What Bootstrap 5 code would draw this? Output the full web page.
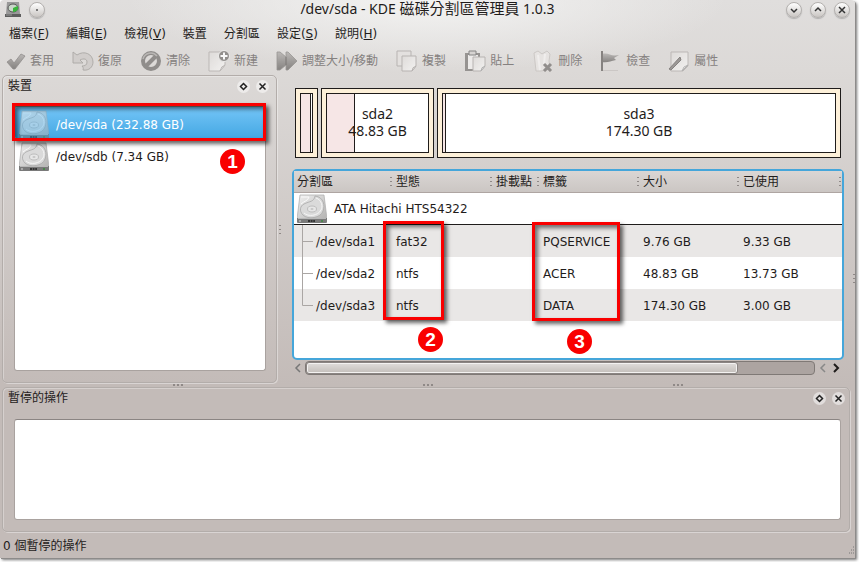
<!DOCTYPE html>
<html lang="zh-Hant">
<head>
<meta charset="utf-8">
<meta name="viewport" content="width=device-width, initial-scale=1">
<title>/dev/sda - KDE 磁碟分割區管理員 1.0.3</title>
<link href="https://cdn.jsdelivr.net/npm/bootstrap@5.3.0/dist/css/bootstrap.min.css" rel="stylesheet">
<style>
  body { background: #fff; color: #1f1c1b; font: 12px/16px "DejaVu Sans", "Noto Sans CJK TC", sans-serif; }
  button { color: inherit; font: inherit; background: none; border: 0; padding: 0; }
  svg { display: block; flex: none; }
  .page { padding: 0 4px 4px 0; }
  .win { min-width: 0; background: radial-gradient(ellipse 300px 72px at 50% 0, #f3f3f2 0, #f3f3f200 100%), linear-gradient(#e0dedd 0, #dcd9d7 70px, #c3bbb8 385px);
    box-shadow: 1px 1px 0 #8d8b8a, 2px 2px 3px #777; border-radius: 4px 4px 0 0; }
  .titlebar { height: 20px; padding: 0 5px; font: 14px/18px "Noto Sans", "Noto Sans CJK TC", sans-serif; }
  .titlebar span { font-size: 15px; line-height: 16px; }
  .caption-text { height: 20px; }
  .side { width: 64px; height: 18px; }
  .round { width: 16px; height: 16px; border-radius: 50%; border: 1px solid #b3b0ae; background: linear-gradient(#fff, #c9c5c2); box-shadow: 0 1px 1px #8888; }
  .menubar { padding: 6px 9px 4px; gap: 17px; height: 27px; }
  .menubar a { color: inherit; text-decoration: none; white-space: nowrap; }
  .toolbar { height: 28px; gap: 18px; padding-left: 4px; color: #858180; }
  .tool { gap: 4px; white-space: nowrap; }
  .tool svg { opacity: .85; }
  .panel { border: 1px solid #b3adaa; border-radius: 5px; box-shadow: inset 1px 1px 0 #ffffff50, 1px 1px 0 #ffffff60; }
  .panel-head { height: 20px; padding: 2px 7px 2px 5px; }
  .mini { width: 13px; height: 13px; border-radius: 50%; background: #ffffff80; margin-left: 6px; }
  .devices { flex: none; width: 275px; margin-left: 2px; }
  .well { background: #fff; border: 1px solid #a9a29f; border-top-color: #8b8583; border-radius: 3px; }
  .devices .well { margin: 10px 10px 11px 11px; position: relative; }
  .dev { height: 32px; padding: 3px 0 0 4px; gap: 7px; }
  .dev.on { color: #fff; background: linear-gradient(#74c5f7, #43a7e3); border-radius: 3px; }
  .dev.on svg { opacity: .55; }
  .mark-box { position: absolute; border: 3px solid #f90000; box-shadow: 3px 3px 4px #0009, inset 3px 3px 4px #0008; pointer-events: none; }
  .mark-num { position: absolute; width: 25px; height: 25px; border-radius: 50%; background: #f90000; color: #fff; text-align: center; font: bold 19px/25px "Liberation Sans", sans-serif; }
  .m1 { left: -3px; right: -1px; top: -4px; height: 38px; }
  .n1 { right: 20px; top: 42px; }
  .m2 { left: 89px; top: 50px; width: 61px; height: 99px; }
  .n2 { left: 124px; top: 156px; }
  .m3 { left: 238px; top: 51px; width: 88px; height: 99px; }
  .n3 { left: 273px; top: 158px; }
  .vsplit { flex: none; width: 15px; padding-left: 2px; }
  .right { padding-top: 13px; min-width: 0; }
  .parts { display: grid; grid-template-columns: minmax(0, 23fr) minmax(0, 113fr) minmax(0, 404fr); height: 70px; gap: 3px; margin: 0 3px; font: 14px/17px "Noto Sans", sans-serif; }
  .part { border: 1px solid #1f1c1b; background: #fdf0d9; padding: 4px; }
  .space { border: 1px solid #1f1c1b; background: #fff; height: 100%; position: relative; }
  .used { position: absolute; left: 0; top: 0; bottom: 0; background: #f6e6e6; border-right: 1px solid #1f1c1b; }
  .caption { position: relative; margin-top: -2px; }
  .tree { margin-top: 11px; border: 2px solid #45a6da; border-radius: 5px; background: #fff; position: relative; min-height: 190px; }
  .tree table { width: 100%; table-layout: fixed; border-collapse: separate; border-spacing: 0; }
  .tree th, .tree td { padding: 0 0 0 3px; white-space: nowrap; font-weight: 400; }
  .tree th { height: 22px; background: linear-gradient(#dad6d4, #cbc6c3); border-bottom: 1px solid #aea5a2; }
  .tree td { height: 32px; }
  .tree .cell td { padding-top: 1px; }
  .tree .cell td:first-child { padding-top: 0; }
  .c1 { width: 99px; } .c2 { width: 100px; } .c3 { width: 47px; }
  .dots { width: 2px; height: 9px; margin-right: 1px; background: repeating-linear-gradient(#8f8987 0 1px, transparent 1px 4px); }
  .dots-h { width: 10px; height: 2px; background: repeating-linear-gradient(90deg, #8f8987 0 2px, transparent 2px 4px); }
  .diskrow td { border-bottom: 1px solid #1f1c1b; }
  .disk { gap: 7px; padding-top: 1px; }
  .alt td { background: #e9e7e6; }
  .branch { height: 32px; position: relative; padding: 1px 0 0 19px; }
  .branch svg { color: #aaa6a4; position: absolute; left: 2px; top: 0; }
  .hscroll { height: 14px; margin-top: 1px; padding: 0 3px 0 1px; }
  .groove { background: #aca4a1; border: 1px solid #7f7976; border-radius: 4px; height: 14px; margin: 0 4px 0 3px; }
  .thumb { width: 85%; height: 12px; border: 1px solid #8b8583; border-radius: 3px; background: linear-gradient(#e0dddb, #c3beba); box-shadow: inset 0 0 0 1px #f4f2f1; }
  .rsplit { flex: none; width: 11px; padding-top: 98px; }
  .hsplit { height: 4px; padding-left: 173px; gap: 240px; }
  .pending { height: 145px; margin: 0 5px 0 2px; }
  .pending .panel-head { padding-right: 4px; }
  .pending .well { margin: 11px 8px 11px 11px; }
  .status { padding: 6px 0 4px 3px; }
</style>
<script src="https://cdn.jsdelivr.net/npm/bootstrap@5.3.0/dist/js/bootstrap.bundle.min.js"></script>
</head>
<body>
<svg width="0" height="0" class="position-absolute">
  <defs>
    <linearGradient id="metal" x2="1" y2="1"><stop stop-color="#f0f0f0"/><stop offset="1" stop-color="#b4b3b2"/></linearGradient>
    <linearGradient id="dim" x2="0" y2="1"><stop stop-color="#b5b2b0"/><stop offset="1" stop-color="#777472"/></linearGradient>
    <linearGradient id="sheet" x2="1" y2="1"><stop stop-color="#dedbd9"/><stop offset="1" stop-color="#f7f6f5"/></linearGradient>
    <symbol id="hdd" viewBox="0 0 30 30">
      <path d="M3 1h24l3 24H0z" fill="url(#metal)" stroke="#aaa" stroke-width=".7"/>
      <path d="M18 2C27 3 28 12 26 17c-2 7-15 9-20 4-4-4-3-9 1-11 6-3 10-2 11-8z" fill="#dadada" stroke="#a8a8a8" stroke-width=".8"/>
      <path d="M19 4c6 2 7 9 5 12-3 6-13 7-17 3" fill="none" stroke="#f6f6f6"/>
      <ellipse cx="15" cy="15" rx="4.500" ry="3" fill="#e6e6e6" stroke="#b4b4b4" stroke-width=".8"/>
      <ellipse cx="15" cy="15" rx="1.500" ry="1" fill="#c4c4c4"/>
      <path d="M4 3h8c-1 4-5 4-8 7" fill="none" stroke="#fafafa"/>
      <path d="M0 24h30v4q0 1-1 1H1q-1 0-1-1z" fill="#7a7a7a"/><path d="M1 24.500h28" stroke="#b9b9b9"/>
      <path d="M11 27h7" stroke="#333" stroke-width="2" stroke-dasharray="2 .6"/><path d="M24 27h2" stroke="#3c8a3c" stroke-width="1.500"/><circle cx="3" cy="27" r="1" fill="#bbb"/>
    </symbol>
    <symbol id="float" viewBox="0 0 13 13"><path d="M6.500 3.500l3 3-3 3-3-3z" fill="none" stroke="#222" stroke-width="1.500"/></symbol>
    <symbol id="close" viewBox="0 0 13 13"><path d="M3.500 3.500l6 6m0-6l-6 6" stroke="#222" stroke-width="1.500"/></symbol>
  </defs>
</svg>

<div class="page min-vh-100 d-flex">
<div class="win flex-grow-1 d-flex flex-column">

  <header class="titlebar d-flex justify-content-between align-items-center">
    <div class="side d-flex align-items-center gap-2">
      <svg width="16" height="16" viewBox="0 0 16 16"><path d="M2 0h12l1 12H1z" fill="#999"/><ellipse cx="8" cy="6" rx="5" ry="4" fill="#c9d6c9" stroke="#555"/><path d="M8 6l4.500-2a5 4 0 0 1-4.500 6z" fill="#37b53a"/><path d="M0 12h16v3H0z" fill="#5d5d5d"/><path d="M1 13h6" stroke="#9a9a9a"/></svg>
      <button class="round" aria-label="選單"><svg width="14" height="14"><circle cx="7" cy="7" r="1" fill="#555"/></svg></button>
    </div>
    <div class="caption-text">/dev/sda - KDE <span>磁碟分割區管理員</span> 1.0.3</div>
    <div class="side d-flex align-items-center justify-content-end gap-2">
      <button class="round" aria-label="最小化"><svg width="14" height="14"><path d="M4 6l3 3 3-3" fill="none" stroke="#333" stroke-width="1.500"/></svg></button>
      <button class="round" aria-label="最大化"><svg width="14" height="14"><path d="M4 8l3-3 3 3" fill="none" stroke="#333" stroke-width="1.500"/></svg></button>
      <button class="round" aria-label="關閉"><svg width="14" height="14"><path d="M4 4l6 6m0-6l-6 6" stroke="#333" stroke-width="1.500"/></svg></button>
    </div>
  </header>

  <nav class="menubar d-flex">
    <a href="#">檔案(<u>F</u>)</a><a href="#">編輯(<u>E</u>)</a><a href="#">檢視(<u>V</u>)</a><a href="#">裝置</a><a href="#">分割區</a><a href="#">設定(<u>S</u>)</a><a href="#">說明(<u>H</u>)</a>
  </nav>

  <div class="toolbar d-flex align-items-center">
    <button class="tool d-flex align-items-center"><svg width="22" height="22"><path d="M3 12l4-3 3 4 7-9 4 2-10 13H9z" fill="url(#dim)" stroke="#858280" stroke-width=".8"/></svg>套用</button>
    <button class="tool d-flex align-items-center"><svg width="22" height="22"><path d="M1 2v11h10l-3-3c4-2 7-1 7 2s-2 4-5 4c2 2 1 3 1 4 6 1 10-3 10-8 0-8-9-12-16-7z" fill="#cfcbc9" stroke="#a3a09d" stroke-width=".9"/></svg>復原</button>
    <button class="tool d-flex align-items-center"><svg width="22" height="22"><circle cx="11" cy="11" r="8" fill="none" stroke="#83807e" stroke-width="4"/><path d="M5.500 16.500l11-11" stroke="#83807e" stroke-width="4"/><path d="M3 9a8 8 0 0 1 14-3" fill="none" stroke="#b3b0ae" stroke-width="1.500"/></svg>清除</button>
    <button class="tool d-flex align-items-center"><svg width="22" height="22"><path d="M1 2h16v13l-5 6H1z" fill="url(#sheet)" stroke="#b7b3b1"/><path d="M12 21q1-5 5-6z" fill="#fff" stroke="#b7b3b1"/><circle cx="16" cy="6" r="5.500" fill="#858280" stroke="#f1f0ef"/><path d="M16 2.500v7M12.500 6h7" stroke="#fff" stroke-width="2"/></svg>新建</button>
    <button class="tool d-flex align-items-center"><svg width="22" height="22"><path d="M1 2l3 0 6 5V2h2l9 9-9 9h-2v-5l-6 5H1z" fill="url(#dim)" stroke="#8d8a88" stroke-width=".8"/><path d="M10 7v8" stroke="#686563"/></svg>調整大小/移動</button>
    <button class="tool d-flex align-items-center"><svg width="22" height="22"><path d="M1 1h14v15H1z" fill="#e4e1df" stroke="#b1adab"/><path d="M6 6h14v10l-4 5H6z" fill="url(#sheet)" stroke="#b1adab"/><path d="M16 21q0-4 4-5z" fill="#fff" stroke="#b1adab"/></svg>複製</button>
    <button class="tool d-flex align-items-center"><svg width="22" height="22"><path d="M1 3h15v18H1z" fill="#8a8785"/><path d="M4 5h10v14H4z" fill="#f0eeed"/><path d="M5 1h7v4H5z" fill="#d4d1cf" stroke="#777"/><path d="M9 7h12v9l-4 5H9z" fill="url(#sheet)" stroke="#b1adab"/><path d="M17 21q0-4 4-5z" fill="#fff" stroke="#aaa"/></svg>貼上</button>
    <button class="tool d-flex align-items-center"><svg width="22" height="22"><path d="M2 3l4-2 4 3 5-3 3 3-1 7 1 8-9 2H4L3 12z" fill="#e8e5e3" stroke="#c9c5c2"/><path d="M6 5l2 15M13 4l-1 10" stroke="#f3f1f0" stroke-width="2"/><path d="M12 14l7 7m0-7l-7 7" stroke="#85817f" stroke-width="3"/></svg>刪除</button>
    <button class="tool d-flex align-items-center"><svg width="22" height="22"><path d="M2 4c7-2 8 3 17 1l-5 3 2 2c-6 1-8 3-14 2z" fill="url(#dim)"/><path d="M2 1v20" stroke="#777371" stroke-width="2"/><path d="M3 20.500h15" stroke="#c9c5c3"/></svg>檢查</button>
    <button class="tool d-flex align-items-center"><svg width="22" height="22"><path d="M3 2h17v14l-5 5H3z" fill="url(#sheet)" stroke="#b7b3b1"/><path d="M14 21q1-5 6-6z" fill="#fff" stroke="#aaa"/><path d="M1 19L12 7l1 3L3 20z" fill="#908d8b" stroke="#777371"/></svg>屬性</button>
  </div>

  <main class="flex-grow-1 d-flex">
    <section class="panel devices d-flex flex-column">
      <div class="panel-head d-flex align-items-center"><span class="flex-grow-1">裝置</span>
        <button class="mini" aria-label="浮動"><svg width="13" height="13"><use href="#float"/></svg></button>
        <button class="mini" aria-label="關閉"><svg width="13" height="13"><use href="#close"/></svg></button></div>
      <div class="well flex-grow-1">
        <div class="dev on d-flex align-items-center"><svg width="30" height="30"><use href="#hdd"/></svg>/dev/sda (232.88 GB)</div>
        <div class="dev d-flex align-items-center"><svg width="30" height="30"><use href="#hdd"/></svg>/dev/sdb (7.34 GB)</div>
        <div class="mark-box m1"></div><div class="mark-num n1">1</div>
      </div>
    </section>
    <div class="vsplit d-flex align-items-center"><div class="dots m-0"></div></div>

    <section class="right flex-grow-1 d-flex flex-column">
      <div class="parts">
        <div class="part"><div class="space"><div class="used" style="width:92%"></div></div></div>
        <div class="part"><div class="space d-flex align-items-center justify-content-center text-center"><div class="used" style="width:28%"></div><div class="caption">sda2<br>48.83&nbsp;GB</div></div></div>
        <div class="part"><div class="space d-flex align-items-center justify-content-center text-center"><div class="used" style="width:3px"></div><div class="caption">sda3<br>174.30&nbsp;GB</div></div></div>
      </div>
      <div class="tree flex-grow-1">
        <table>
          <colgroup><col class="c1"><col class="c2"><col class="c3"><col class="c2"><col class="c2"><col></colgroup>
          <thead><tr>
            <th><div class="d-flex justify-content-between align-items-center">分割區<i class="dots"></i></div></th>
            <th><div class="d-flex justify-content-between align-items-center">型態<i class="dots"></i></div></th>
            <th><div class="d-flex justify-content-between align-items-center">掛載點<i class="dots"></i></div></th>
            <th><div class="d-flex justify-content-between align-items-center">標籤<i class="dots"></i></div></th>
            <th><div class="d-flex justify-content-between align-items-center">大小<i class="dots"></i></div></th>
            <th><div class="d-flex justify-content-between align-items-center">已使用<i class="dots"></i></div></th>
          </tr></thead>
          <tbody>
            <tr class="diskrow"><td colspan="6"><div class="disk d-flex align-items-center"><svg width="30" height="30"><use href="#hdd"/></svg>ATA Hitachi HTS54322</div></td></tr>
            <tr class="alt cell"><td><div class="branch d-flex align-items-center"><svg width="16" height="32"><path d="M3.500 0v32M4 16.500h10" fill="none" stroke="currentColor"/></svg>/dev/sda1</div></td><td>fat32</td><td></td><td>PQSERVICE</td><td>9.76 GB</td><td>9.33 GB</td></tr>
            <tr class="cell"><td><div class="branch d-flex align-items-center"><svg width="16" height="32"><path d="M3.500 0v32M4 16.500h10" fill="none" stroke="currentColor"/></svg>/dev/sda2</div></td><td>ntfs</td><td></td><td>ACER</td><td>48.83 GB</td><td>13.73 GB</td></tr>
            <tr class="alt cell"><td><div class="branch d-flex align-items-center"><svg width="16" height="32"><path d="M3.500 0v16.500H14" fill="none" stroke="currentColor"/></svg>/dev/sda3</div></td><td>ntfs</td><td></td><td>DATA</td><td>174.30 GB</td><td>3.00 GB</td></tr>
          </tbody>
        </table>
        <div class="mark-box m2"></div><div class="mark-num n2">2</div>
        <div class="mark-box m3"></div><div class="mark-num n3">3</div>
      </div>
      <div class="hscroll d-flex align-items-center">
        <button aria-label="向左捲動"><svg width="9" height="12"><path d="M7 2L3 6l4 4" fill="none" stroke="#777" stroke-width="1.500"/></svg></button>
        <div class="groove flex-grow-1"><div class="thumb"></div></div>
        <button aria-label="向左"><svg width="9" height="12"><path d="M6 2L2 6l4 4" fill="none" stroke="#888" stroke-width="1.500"/></svg></button>
        <button class="ms-1" aria-label="向右"><svg width="9" height="12"><path d="M2 2l4 4-4 4" fill="none" stroke="#1f1c1b" stroke-width="2"/></svg></button>
      </div>
      <div class="pb-2"></div>
    </section>
    <div class="rsplit d-flex align-items-center justify-content-end"><div class="dots m-0"></div></div>
  </main>

  <div class="hsplit d-flex align-items-center"><i class="dots-h"></i><i class="dots-h"></i><i class="dots-h"></i></div>

  <section class="panel pending d-flex flex-column">
    <div class="panel-head d-flex align-items-center"><span class="flex-grow-1">暫停的操作</span>
      <button class="mini" aria-label="浮動"><svg width="13" height="13"><use href="#float"/></svg></button>
      <button class="mini" aria-label="關閉"><svg width="13" height="13"><use href="#close"/></svg></button></div>
    <div class="well flex-grow-1"></div>
  </section>

  <footer class="status d-flex justify-content-between align-items-end"><span>0 個暫停的操作</span>
    <svg width="8" height="8"><path d="M6 1h1M4 4h1M6 4h1M2 7h1M4 7h1M6 7h1" stroke="#777"/></svg></footer>
</div>
</div>
</body>
</html>
